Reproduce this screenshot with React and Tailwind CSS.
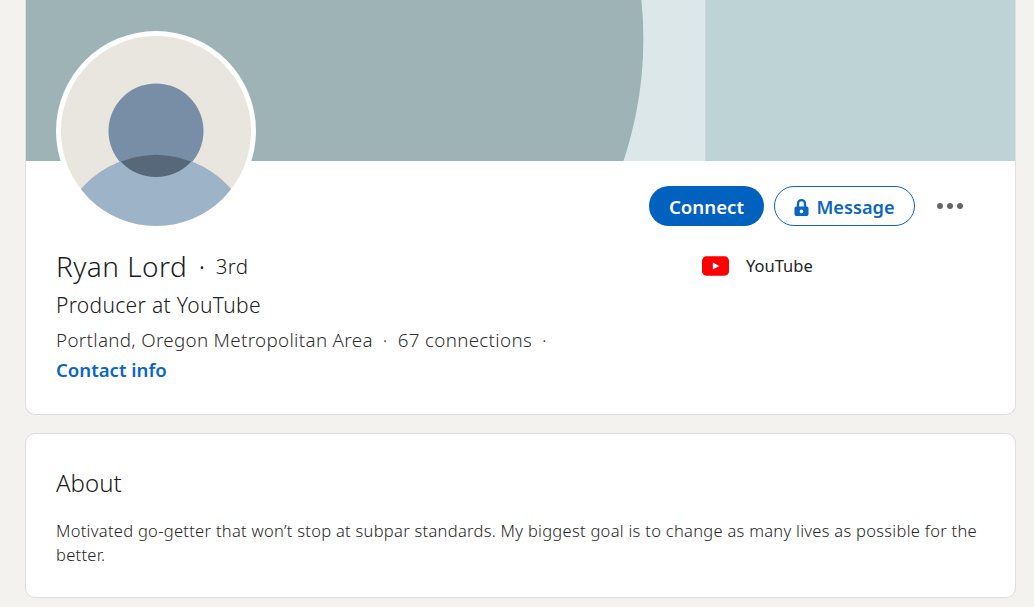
import React from "react";

const font = { sans: "font-['Noto_Sans','Open_Sans',sans-serif]" };

function Banner() {
  return (
    <svg viewBox="0 0 990 161" className="block w-full h-[161px]" preserveAspectRatio="none">
      <rect width="990" height="161" fill="#dbe7e9" />
      <rect x="680" width="310" height="161" fill="#bed3d6" />
      <circle cx="236" cy="39" r="382" fill="#9db3b5" />
    </svg>
  );
}

function Avatar() {
  return (
    <svg viewBox="0 0 200 200" className="absolute left-[30px] top-[31px] w-[200px] h-[200px]">
      <defs>
        <clipPath id="face">
          <circle cx="100" cy="100" r="95" />
        </clipPath>
      </defs>
      <circle cx="100" cy="100" r="100" fill="#fff" />
      <circle cx="100" cy="100" r="95" fill="#e9e5df" />
      <g clipPath="url(#face)">
        <circle cx="100" cy="100" r="47.5" fill="#778ea6" />
        <circle cx="100" cy="224" r="100" fill="#9db3c8" />
        <path d="M64.700 130.400 A100 100 0 0 1 135.300 130.400 A47.500 47.500 0 0 1 64.700 130.400 Z" fill="#56687a" />
      </g>
    </svg>
  );
}

function LockIcon() {
  return (
    <svg viewBox="2 0.500 12 14.500" className="w-[15px] h-[17px]" fill="#0a66c2">
      <path d="M12.500 7H12V4.500a4 4 0 0 0-8 0V7h-.5A1.500 1.500 0 0 0 2 8.500v5A1.500 1.500 0 0 0 3.500 15h9a1.500 1.500 0 0 0 1.500-1.500v-5A1.500 1.500 0 0 0 12.500 7zM6 4.500a2 2 0 0 1 4 0V7H6zM8 12.600a1.600 1.600 0 1 1 0-3.200 1.600 1.600 0 0 1 0 3.200z" />
    </svg>
  );
}

function YoutubeLogo() {
  return (
    <svg viewBox="0 0 28 20" className="w-[27px] h-[20px]">
      <rect width="28" height="20" rx="4.500" fill="#ff0000" />
      <path d="M11.200 6.300 18 10l-6.800 3.700z" fill="#fff" />
    </svg>
  );
}

export default function App() {
  return (
    <div className={`w-[1034px] h-[607px] overflow-hidden bg-[#f3f2ef] pl-[25px] pr-[18px] ${font.sans}`}>
      <div className="relative h-[415px] bg-white border-x border-b border-[#dfdeda] rounded-b-[10px]">
        <Banner />
        <Avatar />

        <div className="flex justify-end items-center gap-[10px] pt-[25px] pr-[50px]">
          <button className="h-10 w-[115px] pt-[3px] rounded-full bg-[#0061bf] text-white text-[18.7px] font-semibold">
            Connect
          </button>
          <button className="h-10 w-[141px] pt-[3px] rounded-full border border-[#0a66c2] text-[#0a66c2] text-[18.2px] font-semibold flex items-center justify-center gap-[7px]">
            <LockIcon />
            Message
          </button>
          <div className="flex gap-1 ml-3 mr-[2px]">
            <span className="w-[6px] h-[6px] rounded-full bg-[#666666]" />
            <span className="w-[6px] h-[6px] rounded-full bg-[#666666]" />
            <span className="w-[6px] h-[6px] rounded-full bg-[#666666]" />
          </div>
        </div>

        <div className="flex justify-between pl-[30px] pt-[21px]">
          <div className="font-light tracking-[0.32px]">
            <div className="flex items-center h-[38px] text-[#1c1c1c]">
              <span className="text-[28px] leading-[38px] tracking-[0.45px]">Ryan Lord</span>
              <span className="text-[20px] ml-[12px] pt-[3px] font-normal">·</span>
              <span className="text-[20.500px] ml-[11px]">3rd</span>
            </div>
            <div className="text-[21px] leading-[28px] mt-[6px] text-[#202020]">Producer at YouTube</div>
            <div className="text-[18.800px] leading-[26px] mt-[8px] text-[#303030]">
              Portland, Oregon Metropolitan Area<span className="mx-[10px]">·</span>67 connections
              <span className="ml-[10px]">·</span>
            </div>
            <div className="text-[18.600px] leading-[26px] mt-[4px] font-semibold tracking-normal text-[#0a66c2]">Contact info</div>
          </div>
          <div className="flex items-center h-[38px] w-[313px] gap-[17px]">
            <YoutubeLogo />
            <span className="text-[16.500px] pt-[1px] text-[#242424]">YouTube</span>
          </div>
        </div>
      </div>

      <div className="mt-[18px] h-[165px] bg-white border border-[#dfdeda] rounded-[10px] px-[30px] pt-[31px] font-light">
        <h2 className="text-[24px] leading-[36px] text-[#1c1c1c]">About</h2>
        <p className="mt-[18px] text-[16.500px] leading-[24px] tracking-[0.29px] text-[#262626]">
          Motivated go-getter that won’t stop at subpar standards. My biggest goal is to change as many lives as possible for the better.
        </p>
      </div>
    </div>
  );
}
